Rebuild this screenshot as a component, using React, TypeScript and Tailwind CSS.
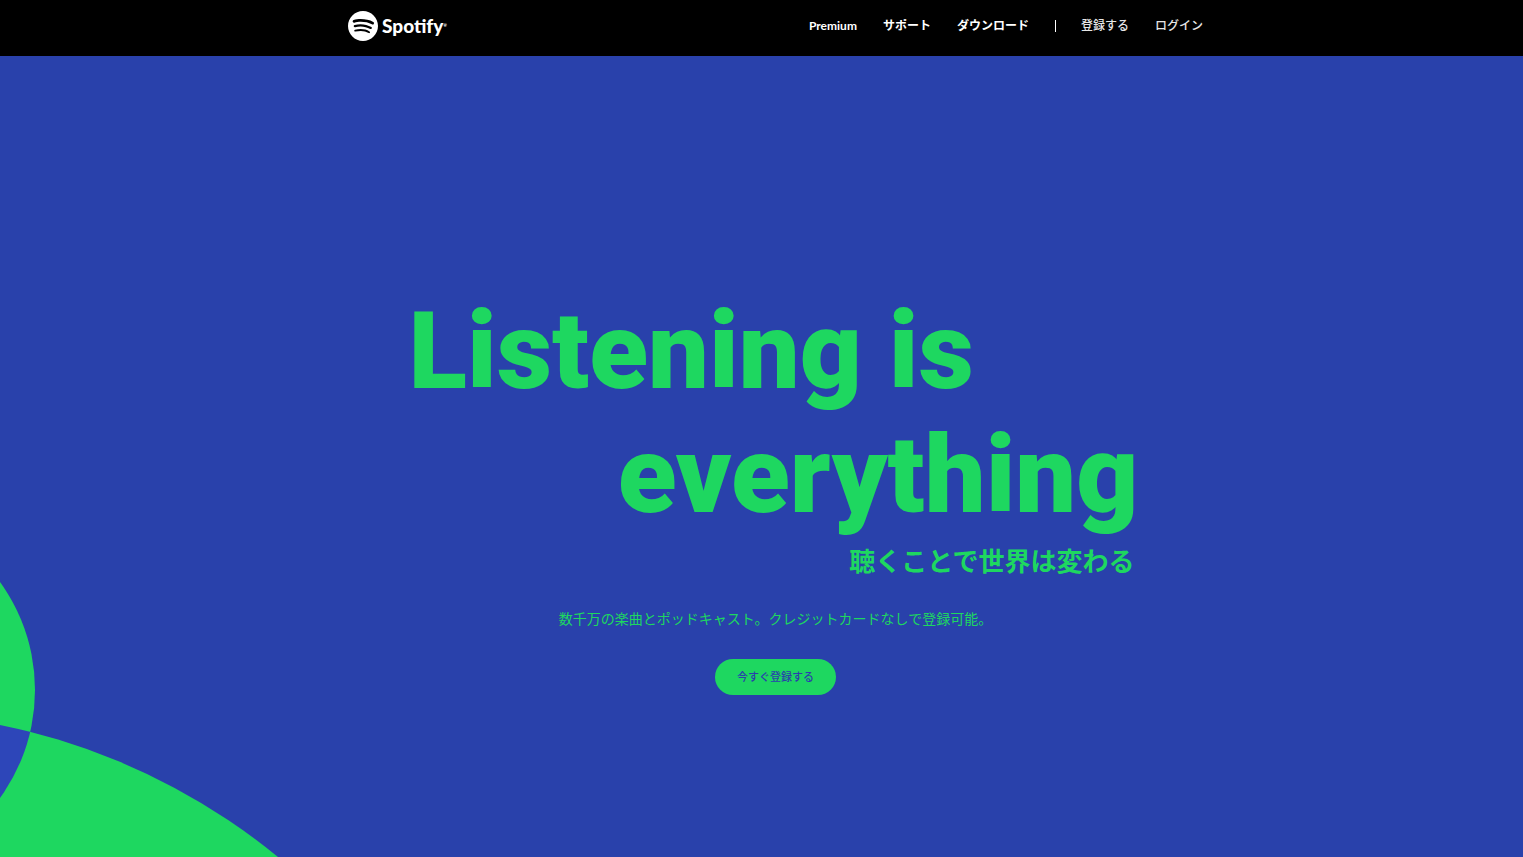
import React from 'react';
import { SiSpotify } from 'react-icons/si';

const mainLinks = [
  { label: 'Premium', href: '#premium' },
  { label: 'サポート', href: '#support' },
  { label: 'ダウンロード', href: '#download' },
];

const accountLinks = [
  { label: '登録する', href: '#signup' },
  { label: 'ログイン', href: '#login' },
];

const Header: React.FC = () => (
  <header className="bg-black pl-7">
    <div className="mx-auto flex h-14 max-w-[855px] items-center justify-between pb-1 text-white">
      <a href="#home" aria-label="Spotify" className="flex items-center gap-1">
        <SiSpotify className="h-[30px] w-[30px]" />
        <span className="flex items-center font-['Lato','Liberation_Sans',sans-serif] text-[19px] leading-6 font-black">
          Spotify<span className="text-[4px] leading-4">®</span>
        </span>
      </a>
      <nav className="flex items-center gap-[26px] text-xs">
        <div className="flex items-center gap-[26px] font-bold">
          {mainLinks.map(link => (
            <a key={link.label} href={link.href} className="hover:text-[#1ed760]">{link.label}</a>
          ))}
        </div>
        <div className="flex items-center gap-[26px] border-l border-white pl-[25px] leading-3 font-medium text-[#e6e6e6]">
          {accountLinks.map(link => (
            <a key={link.label} href={link.href} className="hover:text-[#1ed760]">{link.label}</a>
          ))}
        </div>
      </nav>
    </div>
  </header>
);

// Two overlapping circles in the lower left corner
const Bursts: React.FC = () => (
  <svg className="absolute bottom-0 left-0" width="300" height="300" viewBox="0 557 300 300" aria-hidden="true">
    <defs>
      <clipPath id="small">
        <circle cx="-149" cy="690" r="184" />
      </clipPath>
    </defs>
    <circle cx="-149" cy="690" r="184" fill="#1ed760" />
    <circle cx="-128" cy="1353" r="641" fill="#1ed760" />
    <circle cx="-128" cy="1353" r="641" fill="#2d46b9" clipPath="url(#small)" />
  </svg>
);

const Hero: React.FC = () => (
  <main className="relative flex flex-1 flex-col items-center overflow-hidden bg-[#2941ab] pt-[233px] pb-24 pl-7 text-[#1ed760]">
    <Bursts />
    <div className="relative mr-1 w-full max-w-[730px]">
      <h1 className="font-['Roboto','Liberation_Sans',sans-serif] text-[108px] leading-[124px] font-black whitespace-nowrap">
        <span className="block">Listening is</span>
        <span className="block text-right">everything</span>
      </h1>
      <p className="mt-1 pr-1 text-right text-[26px] leading-10 font-bold">聴くことで世界は変わる</p>
    </div>
    <p className="relative mt-7 text-sm leading-5">数千万の楽曲とポッドキャスト。クレジットカードなしで登録可能。</p>
    <button type="button" className="relative mt-[30px] h-9 rounded-full bg-[#1ed760] px-[22px] text-[11px] font-medium text-[#2941ab] hover:bg-[#1fdf64]">
      今すぐ登録する
    </button>
  </main>
);

export default function App() {
  return (
    <div className="flex min-h-screen flex-col font-['Lato','Noto_Sans_CJK_JP',sans-serif]">
      <Header />
      <Hero />
    </div>
  );
}
